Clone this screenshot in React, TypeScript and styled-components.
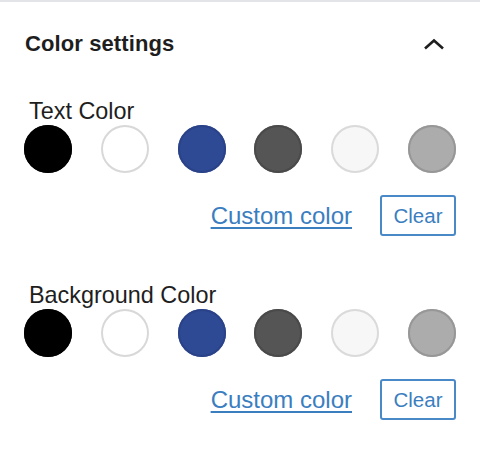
import React from 'react';
import styled, { createGlobalStyle } from 'styled-components';

const GlobalStyle = createGlobalStyle`
  html, body {
    margin: 0;
    padding: 0;
    background: #fff;
  }
  body {
    font-family: 'Liberation Sans', Arial, sans-serif;
    color: #1e1e1e;
  }
`;

const Panel = styled.div`
  width: 480px;
  border-top: 2px solid #e2e4e7;
`;

const PanelHeader = styled.div`
  display: flex;
  align-items: center;
  justify-content: space-between;
  height: 84px;
  margin-bottom: 12px;
  padding: 0 34px 0 25px;
`;

const PanelTitle = styled.h2`
  margin: 0;
  font-size: 22px;
  font-weight: 700;
  letter-spacing: 0.1px;
  color: #1e1e1e;
`;

const ToggleButton = styled.button`
  display: flex;
  align-items: center;
  justify-content: center;
  width: 24px;
  height: 24px;
  padding: 0;
  border: none;
  background: none;
  color: #1e1e1e;
  cursor: pointer;
`;

const Section = styled.div`
  display: flex;
  flex-direction: column;
  padding: 0 24px;

  & + & {
    margin-top: 46px;
  }
`;

const SectionLabel = styled.div`
  margin: 0 0 1px 5px;
  font-size: 23.4px;
  line-height: 26px;
  color: #1e1e1e;
`;

const Swatches = styled.div`
  display: flex;
  justify-content: space-between;
`;

const Swatch = styled.button<{ $color: string; $ring: string }>`
  width: 48px;
  height: 48px;
  padding: 0;
  border: none;
  border-radius: 50%;
  background: ${props => props.$color};
  box-shadow: inset 0 0 0 2px ${props => props.$ring};
  cursor: pointer;
`;

const Actions = styled.div`
  display: flex;
  align-items: center;
  justify-content: flex-end;
  gap: 28px;
  margin-top: 22px;
`;

const CustomLink = styled.a`
  font-size: 24px;
  color: #3b7ebf;
  text-decoration: underline;
  text-decoration-thickness: 1.5px;
  text-underline-offset: 3px;
  cursor: pointer;
`;

const ClearButton = styled.button`
  width: 76px;
  height: 41px;
  padding: 0;
  border: 2px solid #4a89c7;
  border-radius: 3px;
  background: #fff;
  font-family: 'Liberation Sans', Arial, sans-serif;
  font-size: 20.5px;
  color: #3b7ebf;
  cursor: pointer;
`;

const PALETTE = [
  { color: '#000000', ring: '#000000' },
  { color: '#ffffff', ring: '#d8d8d8' },
  { color: '#2f4a95', ring: '#2a4288' },
  { color: '#555555', ring: '#4a4a4a' },
  { color: '#f7f7f7', ring: '#dadada' },
  { color: '#acacac', ring: '#979797' }
];

const ColorControl: React.FC<{ label: string }> = props => (
  <Section>
    <SectionLabel>{props.label}</SectionLabel>
    <Swatches>
      {PALETTE.map(swatch => (
        <Swatch
          key={swatch.color}
          $color={swatch.color}
          $ring={swatch.ring}
          aria-label={swatch.color}
        />
      ))}
    </Swatches>
    <Actions>
      <CustomLink>Custom color</CustomLink>
      <ClearButton>Clear</ClearButton>
    </Actions>
  </Section>
);

export default function App() {
  return (
    <>
      <GlobalStyle />
      <Panel>
        <PanelHeader>
          <PanelTitle>Color settings</PanelTitle>
          <ToggleButton aria-label="Collapse">
            <svg width="22" height="12" viewBox="0 0 22 12" fill="none">
              <path d="M2 10.5L11 2.5L20 10.5" stroke="currentColor" strokeWidth="2.6" />
            </svg>
          </ToggleButton>
        </PanelHeader>
        <ColorControl label="Text Color" />
        <ColorControl label="Background Color" />
      </Panel>
    </>
  );
}
